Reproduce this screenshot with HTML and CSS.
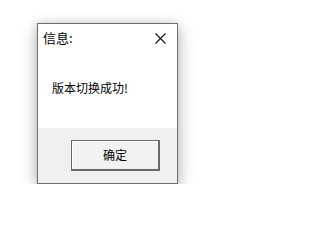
FILE: index.html
```html
<!DOCTYPE html>
<html lang="zh-CN">
<head>
<meta charset="utf-8">
<title>信息</title>
<link rel="stylesheet" href="styles.css">
</head>
<body>
<div class="dialog">
  <div class="titlebar">
    <span class="title">信息:</span>
    <svg class="close" width="11" height="11" viewBox="0 0 11 11" aria-label="关闭">
      <path d="M0.5 0.5 L10.5 10.5 M10.5 0.5 L0.5 10.5" stroke="#111" stroke-width="1.1" fill="none"/>
    </svg>
  </div>
  <div class="content">
    <p class="message">版本切换成功!</p>
  </div>
  <div class="footer">
    <button class="ok">确定</button>
  </div>
</div>
</body>
</html>
```

FILE: styles.css
```css
html, body {
  margin: 0;
  background: #ffffff;
}
body {
  padding: 23px 0 0 37px;
  font-family: "Noto Sans CJK SC", "Noto Sans", sans-serif;
  color: #000;
}
.dialog {
  width: 139px;
  height: 159px;
  border: 1px solid #6f6f6f;
  background: #ffffff;
  box-shadow: 0 5px 16px rgba(0, 0, 0, 0.28), 0 0 8px rgba(0, 0, 0, 0.1);
  display: flex;
  flex-direction: column;
}
.titlebar {
  height: 28px;
  display: flex;
  align-items: center;
  justify-content: space-between;
  padding: 0 11px 0 5px;
}
.title {
  font-size: 13px;
  line-height: 28px;
}
.close {
  display: block;
  margin-top: 1px;
}
.content {
  height: 76px;
  padding: 28px 0 0 14px;
  box-sizing: border-box;
}
.message {
  margin: 0;
  font-size: 12px;
  line-height: 16px;
}
.footer {
  height: 55px;
  background: #f0f0f0;
  padding: 12px 0 0 33px;
  box-sizing: border-box;
}
.ok {
  display: block;
  width: 89px;
  height: 31px;
  margin: 0;
  padding: 0;
  border: 1px solid #6a6a6a;
  border-right-width: 2px;
  border-bottom-width: 2px;
  background: #f2f2f2;
  box-shadow: inset 1px 1px 0 #ffffff;
  font-family: "Noto Sans CJK SC", "Noto Sans", sans-serif;
  font-size: 12px;
  line-height: 16px;
  color: #000;
}
```
